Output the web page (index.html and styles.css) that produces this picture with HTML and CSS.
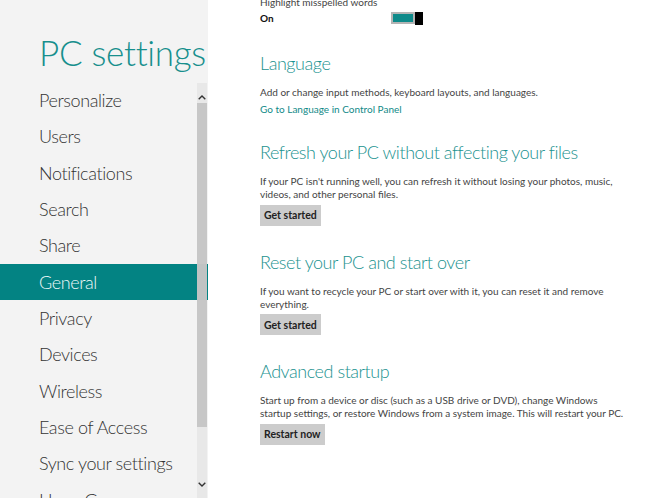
FILE: index.html
```html
<!DOCTYPE html>
<html>
<head>
<meta charset="utf-8">
<link rel="stylesheet" href="styles.css">
</head>
<body>
<div class="app">
  <nav class="side">
    <h1 class="title">PC settings</h1>
    <ul class="menu">
      <li class="item">Personalize</li>
      <li class="item">Users</li>
      <li class="item">Notifications</li>
      <li class="item">Search</li>
      <li class="item">Share</li>
      <li class="item selected">General</li>
      <li class="item">Privacy</li>
      <li class="item">Devices</li>
      <li class="item">Wireless</li>
      <li class="item">Ease of Access</li>
      <li class="item">Sync your settings</li>
      <li class="item">HomeGroup</li>
    </ul>
    <div class="scrollbar">
      <span class="arrow up"><svg width="8" height="5" viewBox="0 0 8 5"><path d="M0.7 4.3 L4 1 L7.3 4.3" fill="none" stroke="#333" stroke-width="1.4"/></svg></span>
      <div class="thumb"></div>
      <span class="arrow down"><svg width="8" height="5" viewBox="0 0 8 5"><path d="M0.7 0.7 L4 4 L7.3 0.7" fill="none" stroke="#333" stroke-width="1.4"/></svg></span>
    </div>
  </nav>
  <main class="content">
    <p class="label">Highlight misspelled words</p>
    <div class="toggle-row">
      <span class="state">On</span>
      <span class="toggle"><span class="track"></span><span class="knob"></span></span>
    </div>

    <section class="group lang">
      <h2 class="heading">Language</h2>
      <p class="desc">Add or change input methods, keyboard layouts, and languages.</p>
      <a class="link">Go to Language in Control Panel</a>
    </section>

    <section class="group">
      <h2 class="heading">Refresh your PC without affecting your files</h2>
      <p class="desc">If your PC isn't running well, you can refresh it without losing your photos, music, videos, and other personal files.</p>
      <button class="btn">Get started</button>
    </section>

    <section class="group">
      <h2 class="heading">Reset your PC and start over</h2>
      <p class="desc">If you want to recycle your PC or start over with it, you can reset it and remove everything.</p>
      <button class="btn">Get started</button>
    </section>

    <section class="group">
      <h2 class="heading">Advanced startup</h2>
      <p class="desc">Start up from a device or disc (such as a USB drive or DVD), change Windows<br>startup settings, or restore Windows from a system image. This will restart your PC.</p>
      <button class="btn">Restart now</button>
    </section>
  </main>
</div>
</body>
</html>
```

FILE: styles.css
```css
* { box-sizing: border-box; }
html, body { margin: 0; padding: 0; }
body {
  width: 665px;
  height: 498px;
  overflow: hidden;
  background: #ffffff;
  font-family: "Lato", "Open Sans", "Liberation Sans", sans-serif;
}
.app {
  display: flex;
  height: 498px;
}
.side {
  position: relative;
  width: 208px;
  flex: none;
  background: #f3f3f3;
  overflow: hidden;
}
.title {
  margin: 0;
  padding: 30px 0 0 39px;
  height: 82px;
  font-size: 35px;
  line-height: 44px;
  letter-spacing: -0.3px;
  font-weight: 300;
  color: #178f8d;
  white-space: nowrap;
}
.menu {
  list-style: none;
  margin: 0;
  padding: 0;
}
.item {
  height: 36.35px;
  line-height: 36px;
  padding-left: 39px;
  font-size: 18px;
  letter-spacing: -0.4px;
  font-weight: 300;
  color: #333333;
  white-space: nowrap;
}
.item.selected {
  background: #038383;
  color: #eef8f8;
}
.scrollbar {
  position: absolute;
  top: 83px;
  bottom: 0;
  right: 1px;
  width: 10px;
  background: rgba(225, 225, 225, 0.6);
}
.thumb {
  position: absolute;
  top: 20px;
  left: 0;
  right: 0;
  height: 324px;
  background: rgba(196, 196, 196, 0.93);
}
.arrow {
  position: absolute;
  left: 1px;
  width: 8px;
  height: 5px;
  display: flex;
}
.arrow.up { top: 12px; }
.arrow.down { top: 399px; }

.content {
  flex: 1;
  padding-left: 52px;
  color: #444444;
  font-size: 10px;
}
.label {
  margin: -5px 0 0;
  line-height: 14px;
  color: #444444;
}
.toggle-row {
  display: flex;
  align-items: center;
  height: 14px;
  margin-top: 2px;
}
.state {
  width: 131px;
  font-weight: 700;
  color: #111111;
}
.toggle {
  display: flex;
  align-items: center;
  height: 14px;
}
.track {
  width: 24px;
  height: 12px;
  border: 2px solid #b4b4b4;
  background: #0e8a8a;
}
.knob {
  width: 8px;
  height: 13px;
  background: #000000;
}
.group {
  margin-top: 24px;
}
.group.lang {
  margin-top: 26px;
}
.heading {
  margin: 0 0 11px;
  font-size: 18px;
  line-height: 24px;
  letter-spacing: -0.45px;
  font-weight: 300;
  color: #1b928f;
  white-space: nowrap;
}
.desc {
  margin: 0;
  width: 372px;
  line-height: 13px;
  color: #444444;
}
.link {
  display: block;
  margin-top: 4px;
  line-height: 13px;
  color: #118a88;
}
.btn {
  display: block;
  margin-top: 3.5px;
  height: 21px;
  padding: 0 4px;
  border: none;
  background: #cccccc;
  font-family: inherit;
  font-size: 10.5px;
  font-weight: 700;
  color: #222222;
}
```
